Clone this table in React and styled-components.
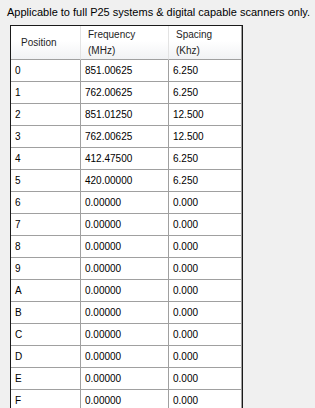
import React from "react";
import styled, { createGlobalStyle } from "styled-components";

const GlobalStyle = createGlobalStyle`
  html, body {
    margin: 0;
    padding: 0;
    background: #f0f0f0;
  }
  body {
    font-family: "Liberation Sans", Arial, sans-serif;
    color: #000;
    overflow: hidden;
  }
`;

const rows = [
  ["0", "851.00625", "6.250"],
  ["1", "762.00625", "6.250"],
  ["2", "851.01250", "12.500"],
  ["3", "762.00625", "12.500"],
  ["4", "412.47500", "6.250"],
  ["5", "420.00000", "6.250"],
  ["6", "0.00000", "0.000"],
  ["7", "0.00000", "0.000"],
  ["8", "0.00000", "0.000"],
  ["9", "0.00000", "0.000"],
  ["A", "0.00000", "0.000"],
  ["B", "0.00000", "0.000"],
  ["C", "0.00000", "0.000"],
  ["D", "0.00000", "0.000"],
  ["E", "0.00000", "0.000"],
  ["F", "0.00000", "0.000"],
];

export default function App() {
  return (
    <Page>
      <GlobalStyle />
      <Note>Applicable to full P25 systems &amp; digital capable scanners only.</Note>
      <Grid>
        <thead>
          <tr>
            <HeadCell $pad={10}>Position</HeadCell>
            <HeadCell $pad={7}>
              Frequency
              <br />
              (MHz)
            </HeadCell>
            <HeadCell $pad={7}>
              Spacing
              <br />
              (Khz)
            </HeadCell>
          </tr>
        </thead>
        <tbody>
          {rows.map((r) => (
            <tr key={r[0]}>
              <Cell>{r[0]}</Cell>
              <Cell>{r[1]}</Cell>
              <Cell>{r[2]}</Cell>
            </tr>
          ))}
        </tbody>
      </Grid>
    </Page>
  );
}

const Page = styled.div`
  padding: 6px 0 0 7px;
  height: 408px;
  box-sizing: border-box;
`;

const Note = styled.div`
  font-size: 11px;
  line-height: 13px;
  white-space: nowrap;
  margin-bottom: 6px;
`;

const Grid = styled.table`
  margin-left: 3px;
  border-collapse: separate;
  border-spacing: 0;
  border: 1px solid #1a1a1a;
  background: #fff;
  table-layout: fixed;
  width: 233px;
  font-size: 10px;

  col:nth-child(1) {
    width: 70px;
  }
`;

const HeadCell = styled.th`
  height: 34px;
  padding: 0 0 0 ${(p) => p.$pad}px;
  text-align: left;
  font-weight: normal;
  line-height: 16px;
  color: #1e1e1e;
  background: linear-gradient(#ffffff 0%, #ffffff 45%, #f1f2f4 100%);
  border-right: 1px solid #e3e3e3;
  border-bottom: 1px solid #a0a0a0;
  box-sizing: border-box;
  vertical-align: middle;

  &:nth-child(1) {
    width: 70px;
  }
  &:nth-child(2) {
    width: 88px;
  }
  &:nth-child(3) {
    width: 73px;
    border-right: 1px solid #a0a0a0;
  }
`;

const Cell = styled.td`
  height: 22px;
  padding: 0 0 0 4px;
  box-sizing: border-box;
  border-right: 1px solid #a0a0a0;
  border-bottom: 1px solid #a0a0a0;
  line-height: 21px;
  white-space: nowrap;
`;
